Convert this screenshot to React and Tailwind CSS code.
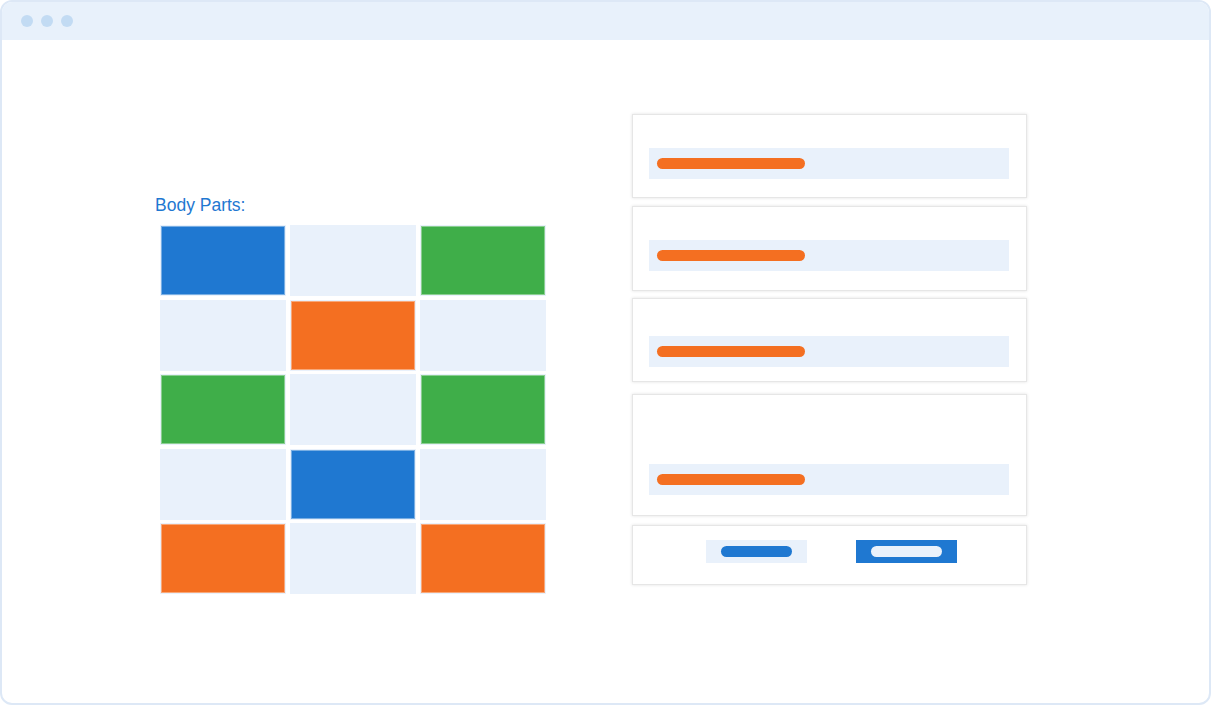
const cells = [
  'blue', 'light', 'green',
  'light', 'orange', 'light',
  'green', 'light', 'green',
  'light', 'blue', 'light',
  'orange', 'light', 'orange',
]

const fill = {
  blue: 'bg-[#1f78d1]',
  green: 'bg-[#3fae49]',
  orange: 'bg-[#f46f21]',
}

function Cell({ kind }) {
  if (kind === 'light') return <div className="h-[71px] bg-[#e9f1fb]" />
  return (
    <div className="h-[71px] bg-[#e9f1fb] p-px">
      <div className={`h-full w-full border border-white/40 ${fill[kind]}`} />
    </div>
  )
}

function FieldCard({ height, top, mt }) {
  return (
    <div
      className={`w-[395px] bg-white border border-[#e6e6e6] shadow-[0_0_3px_rgba(0,0,0,0.12)] ${height} ${top} ${mt}`}
    >
      <div className="ml-[16px] w-[360px] h-[31px] bg-[#e9f1fb] flex items-center pl-[8px]">
        <div className="w-[148px] h-[11px] rounded-full bg-[#f46f21]" />
      </div>
    </div>
  )
}

export default function App() {
  return (
    <div className="w-[1211px] h-[705px] bg-white">
      <div className="h-full rounded-[12px] border-2 border-[#dde8f6] overflow-hidden flex flex-col">
        {/* title bar */}
        <div className="h-[38px] shrink-0 bg-[#e8f1fb] flex items-center gap-[8px] pl-[19px]">
          <span className="w-3 h-3 rounded-full bg-[#c2dbf3]" />
          <span className="w-3 h-3 rounded-full bg-[#c2dbf3]" />
          <span className="w-3 h-3 rounded-full bg-[#c2dbf3]" />
        </div>

        <div className="flex items-start">
          {/* left: grid */}
          <div className="ml-[153px] mt-[154px]">
            <div
              className="h-[22px] leading-[22px] text-[17.5px] text-[#1f78d1]"
              style={{ fontFamily: '"Liberation Sans", Arial, sans-serif' }}
            >
              Body Parts:
            </div>
            <div className="ml-[5px] mt-[9px] grid grid-cols-[126px_126px_126px] gap-x-[4px] gap-y-[3.5px]">
              {cells.map((c, i) => (
                <Cell key={i} kind={c} />
              ))}
            </div>
          </div>

          {/* right: form cards */}
          <div className="ml-[86px] mt-[74px] flex flex-col">
            <FieldCard height="h-[84px]" top="pt-[33px]" mt="mt-0" />
            <FieldCard height="h-[85px]" top="pt-[33px]" mt="mt-[8px]" />
            <FieldCard height="h-[84px]" top="pt-[37px]" mt="mt-[7px]" />
            <FieldCard height="h-[122px]" top="pt-[69px]" mt="mt-[12px]" />
            <div className="mt-[9px] w-[395px] h-[60px] bg-white border border-[#e6e6e6] shadow-[0_0_3px_rgba(0,0,0,0.12)] pt-[14px] pl-[73px] flex items-start gap-[49px]">
              <div className="w-[101px] h-[23px] bg-[#e9f1fb] flex items-center justify-center">
                <div className="w-[71px] h-[11px] rounded-full bg-[#1f78d1]" />
              </div>
              <div className="w-[101px] h-[23px] bg-[#1f78d1] flex items-center justify-center">
                <div className="w-[71px] h-[11px] rounded-full bg-[#e9f1fb]" />
              </div>
            </div>
          </div>
        </div>
      </div>
    </div>
  )
}
